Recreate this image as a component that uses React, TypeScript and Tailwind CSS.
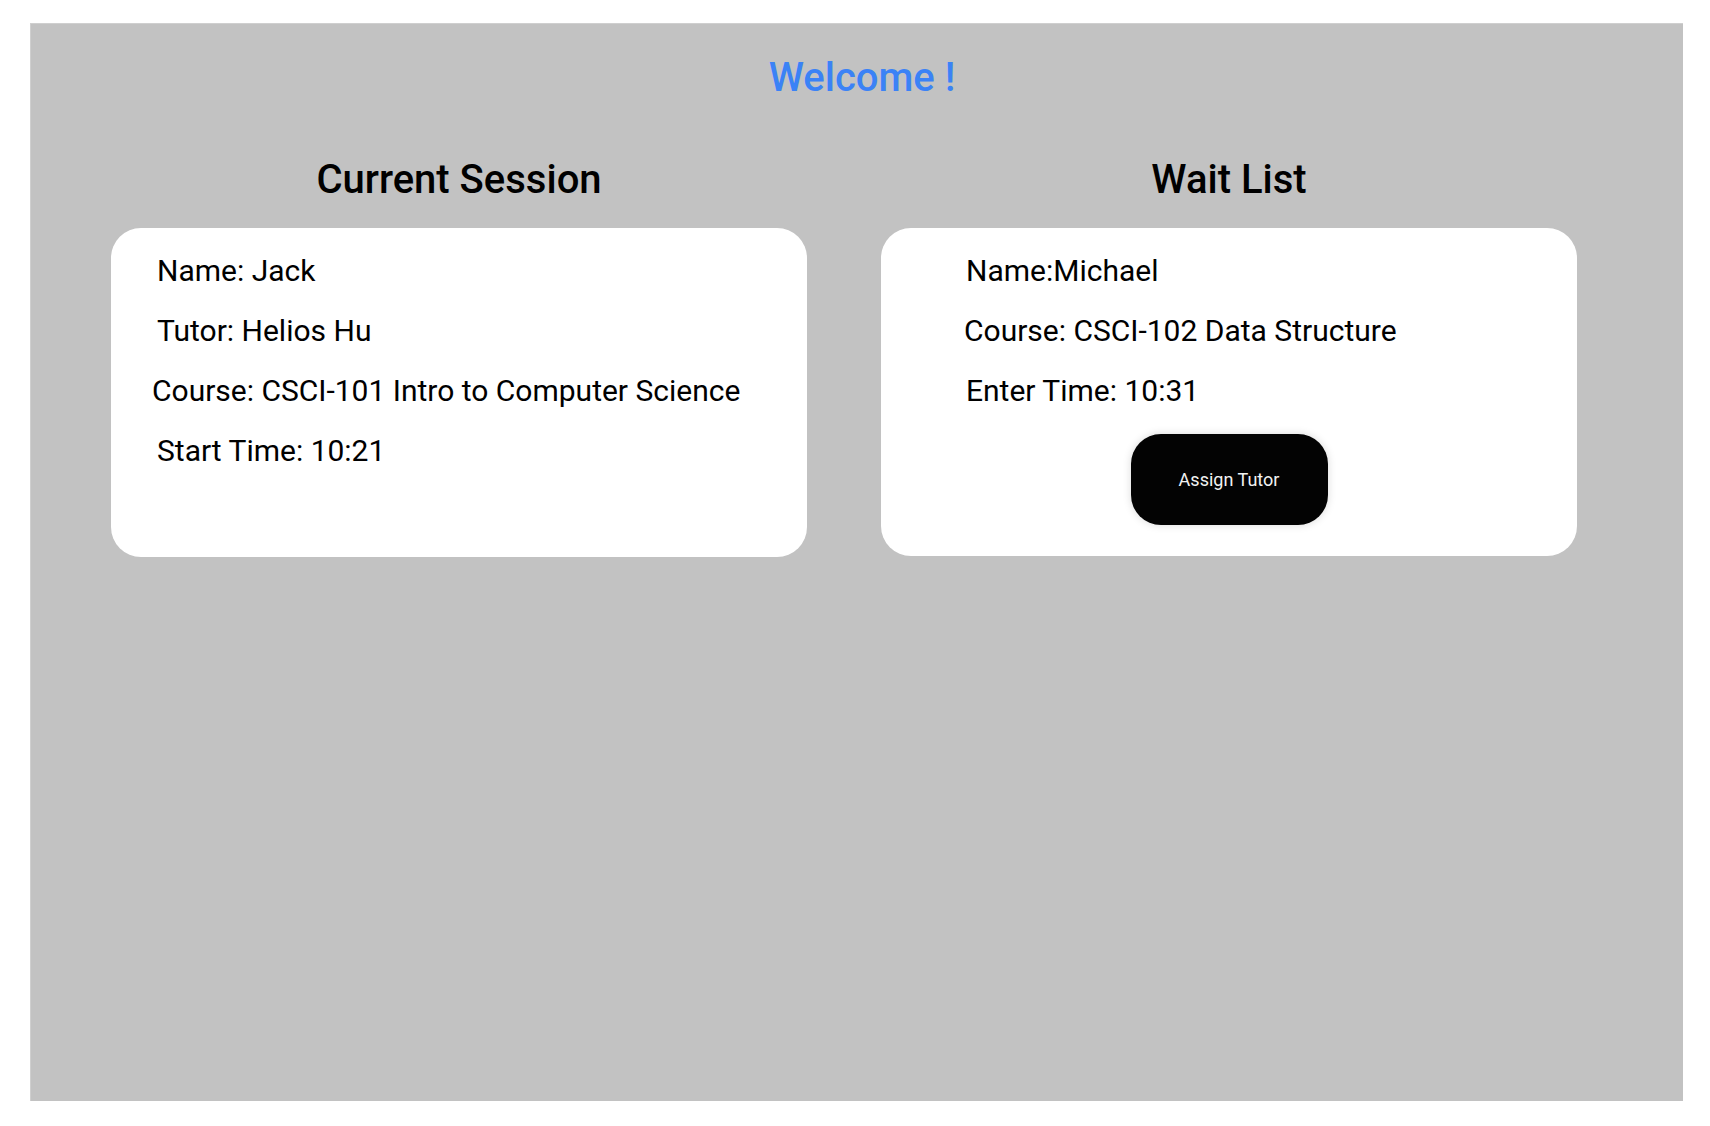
import React from 'react'

const font = { fontFamily: 'Roboto, "Noto Sans", sans-serif' }

function Row({ children, className = '' }: { children: React.ReactNode; className?: string }) {
  return <p className={`text-[30px] leading-[36px] text-black ${className}`}>{children}</p>
}

export default function App() {
  return (
    <div className="min-h-screen w-full bg-white pt-[23px] pl-[30px]" style={font}>
      <div className="h-[1078px] w-[1653px] bg-[#c2c2c2] border-t border-l border-[#cfcfcf] pt-[30px]">
        {/* header */}
        <div className="flex justify-center pl-[10px]">
          <h1 className="text-[40px] leading-[48px] font-medium text-[#3b82f6]">Welcome !</h1>
        </div>

        <div className="mt-[54px] flex gap-[74px] pl-[80px]">
          {/* current session */}
          <div className="flex w-[696px] flex-col items-center">
            <h2 className="text-[40px] leading-[48px] font-medium text-black">Current Session</h2>
            <div className="mt-[24px] h-[329px] w-full rounded-[30px] bg-white pt-[25px]">
              <Row className="pl-[46px]">Name: Jack</Row>
              <Row className="pl-[46px] mt-[24px]">Tutor: Helios Hu</Row>
              <Row className="pl-[41px] mt-[24px]">Course: CSCI-101 Intro to Computer Science</Row>
              <Row className="pl-[46px] mt-[24px]">Start Time: 10:21</Row>
            </div>
          </div>

          {/* wait list */}
          <div className="flex w-[696px] flex-col items-center">
            <h2 className="text-[40px] leading-[48px] font-medium text-black">Wait List</h2>
            <div className="mt-[24px] h-[328px] w-full rounded-[30px] bg-white pt-[25px]">
              <Row className="pl-[85px]">Name:Michael</Row>
              <Row className="pl-[83px] mt-[24px]">Course: CSCI-102 Data Structure</Row>
              <Row className="pl-[85px] mt-[24px]">Enter Time: 10:31</Row>
              <div className="mt-[25px] flex justify-center">
                <button className="h-[91px] w-[197px] rounded-[30px] bg-[#030303] text-[18px] text-[#f2f2f2] shadow-[0_0_8px_rgba(0,0,0,0.15)]">
                  Assign Tutor
                </button>
              </div>
            </div>
          </div>
        </div>
      </div>
    </div>
  )
}
